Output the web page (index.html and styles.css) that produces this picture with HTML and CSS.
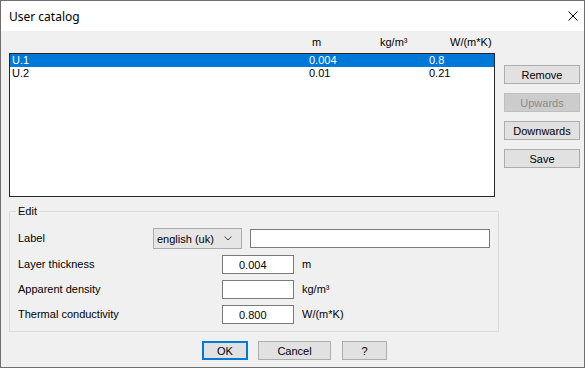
FILE: index.html
```html
<!DOCTYPE html>
<html>
<head>
    <title>User catalog</title>
    <link rel="stylesheet" href="styles.css">
</head>
<body>
    <div class="window">
        <div class="titlebar">
            <span class="title">User catalog</span>
            <svg class="close" width="10" height="10" viewBox="0 0 10 10">
                <path d="M0.5 0.5 L9.5 9.5 M9.5 0.5 L0.5 9.5" stroke="#000" stroke-width="1" fill="none"/>
            </svg>
        </div>
        <div class="client">
            <div class="top">
                <div class="list-col">
                    <div class="list-head">
                        <span class="h-m">m</span>
                        <span class="h-kg">kg/m³</span>
                        <span>W/(m*K)</span>
                    </div>
                    <div class="listbox">
                        <div class="row selected">
                            <span class="c-name">U.1</span>
                            <span class="c-thick">0.004</span>
                            <span>0.8</span>
                        </div>
                        <div class="row">
                            <span class="c-name">U.2</span>
                            <span class="c-thick">0.01</span>
                            <span>0.21</span>
                        </div>
                    </div>
                </div>
                <div class="side-buttons">
                    <button class="btn side">Remove</button>
                    <button class="btn side" disabled>Upwards</button>
                    <button class="btn side">Downwards</button>
                    <button class="btn side">Save</button>
                </div>
            </div>

            <fieldset class="edit">
                <legend>Edit</legend>
                <div class="edit-rows">
                    <div class="edit-row">
                        <span class="lbl lbl-short">Label</span>
                        <div class="combo">
                            <span>english (uk)</span>
                            <svg width="8" height="5" viewBox="0 0 8 5">
                                <path d="M0.5 0.5 L4 4 L7.5 0.5" stroke="#444" stroke-width="1" fill="none"/>
                            </svg>
                        </div>
                        <input class="field wide" type="text" value="">
                    </div>
                    <div class="edit-row">
                        <span class="lbl">Layer thickness</span>
                        <input class="field num" type="text" value="0.004">
                        <span class="unit">m</span>
                    </div>
                    <div class="edit-row">
                        <span class="lbl">Apparent density</span>
                        <input class="field num" type="text" value="">
                        <span class="unit">kg/m³</span>
                    </div>
                    <div class="edit-row">
                        <span class="lbl">Thermal conductivity</span>
                        <input class="field num" type="text" value="0.800">
                        <span class="unit">W/(m*K)</span>
                    </div>
                </div>
            </fieldset>

            <div class="bottom-buttons">
                <button class="btn ok">OK</button>
                <button class="btn cancel">Cancel</button>
                <button class="btn help">?</button>
            </div>
        </div>
    </div>
</body>
</html>
```

FILE: styles.css
```css
body {
    margin: 0;
    background: #ffffff;
    font-family: "Liberation Sans", Arial, sans-serif;
    font-size: 11px;
    color: #000;
}
.window {
    box-sizing: border-box;
    width: 585px;
    height: 368px;
    border: 1px solid #6f6f6f;
    display: flex;
    flex-direction: column;
}
.titlebar {
    height: 30px;
    background: #fff;
    display: flex;
    align-items: center;
    justify-content: space-between;
    padding: 0 6px 0 8px;
}
.title {
    font-family: "Noto Sans", sans-serif;
    font-size: 12px;
}
.close {
    display: block;
}
.client {
    flex: 1;
    background: #f0f0f0;
    padding: 0 3px 0 8px;
}
.top {
    display: flex;
}
.list-col {
    width: 486px;
    flex-shrink: 0;
}
.list-head {
    height: 22px;
    line-height: 22px;
    padding-left: 303px;
    display: flex;
}
.h-m {
    width: 68px;
}
.h-kg {
    width: 70px;
}
.listbox {
    box-sizing: border-box;
    height: 144px;
    background: #fff;
    border: 1px solid #262626;
}
.row {
    height: 13px;
    line-height: 13px;
    padding-left: 2px;
    display: flex;
}
.row.selected {
    background: #0078d7;
    color: #fff;
}
.c-name {
    width: 297px;
}
.c-thick {
    width: 120px;
}
.side-buttons {
    flex-shrink: 0;
    margin-left: 9px;
    padding-top: 34px;
    display: flex;
    flex-direction: column;
    gap: 9px;
}
.btn {
    box-sizing: border-box;
    height: 19px;
    padding: 0;
    background: #e1e1e1;
    border: 1px solid #adadad;
    font-family: "Liberation Sans", Arial, sans-serif;
    font-size: 11px;
    color: #000;
}
.btn.side {
    width: 76px;
}
.btn:disabled {
    background: #cccccc;
    border-color: #bfbfbf;
    color: #8a8a8a;
}
.edit {
    box-sizing: border-box;
    width: 490px;
    height: 127px;
    margin: 8px 0 0 0;
    padding: 0;
    border: 1px solid #dcdcdc;
    min-width: 0;
}
.edit legend {
    margin-left: 6px;
    padding: 0 2px;
    line-height: 12px;
}
.edit-rows {
    padding: 11px 0 0 8px;
    display: flex;
    flex-direction: column;
    gap: 6px;
}
.edit-row {
    display: flex;
    align-items: center;
    height: 19px;
}
.edit-row:first-child {
    height: 21px;
}
.lbl {
    width: 204px;
    margin-top: -2px;
}
.lbl.lbl-short {
    width: 135px;
}
.combo {
    box-sizing: border-box;
    width: 89px;
    height: 21px;
    background: #e5e5e5;
    border: 1px solid #acacac;
    display: flex;
    align-items: center;
    justify-content: space-between;
    padding: 0 9px 0 3px;
}
.field {
    box-sizing: border-box;
    height: 19px;
    border: 1px solid #7a7a7a;
    background: #fff;
    font-family: "Liberation Sans", Arial, sans-serif;
    font-size: 11px;
    padding: 0 3px;
    margin: 0;
    outline: none;
}
.field.wide {
    width: 240px;
    margin-left: 8px;
}
.field.num {
    width: 72px;
    padding-left: 16px;
}
.unit {
    margin-left: 8px;
    margin-top: -2px;
}
.bottom-buttons {
    display: flex;
    margin-top: 9px;
    padding-left: 193px;
}
.btn.ok {
    width: 46px;
    border: 2px solid #0078d7;
}
.btn.cancel {
    width: 73px;
    margin-left: 10px;
}
.btn.help {
    width: 45px;
    margin-left: 11px;
}
```
